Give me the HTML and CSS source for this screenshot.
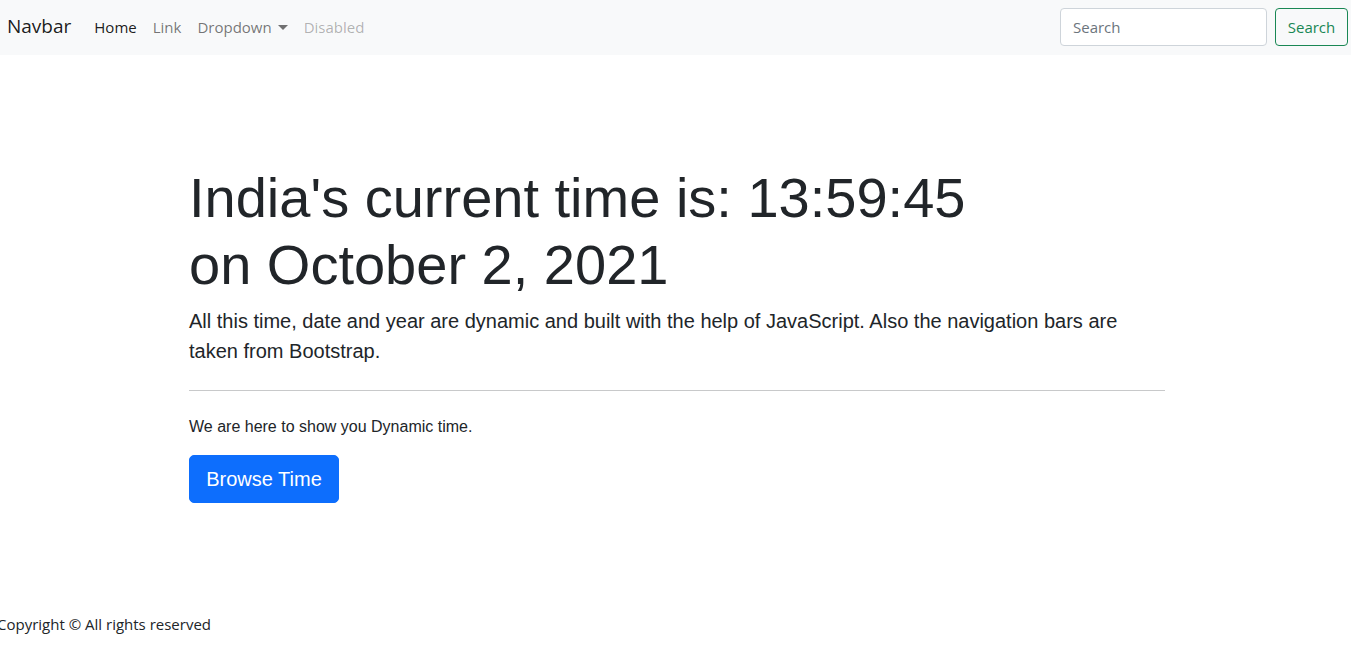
FILE: index.html
```html
<!DOCTYPE html>
<html lang="en">
<head>
<meta charset="utf-8">
<title>Dynamic Time</title>
<link rel="stylesheet" href="styles.css">
</head>
<body>
<nav class="navbar">
  <a class="brand" href="#">Navbar</a>
  <ul class="nav">
    <li><a class="nav-link active" href="#">Home</a></li>
    <li><a class="nav-link" href="#">Link</a></li>
    <li><a class="nav-link dropdown" href="#">Dropdown<span class="caret"></span></a></li>
    <li><a class="nav-link disabled" href="#">Disabled</a></li>
  </ul>
  <form class="search">
    <input class="search-input" type="search" placeholder="Search">
    <button class="search-btn" type="button">Search</button>
  </form>
</nav>
<main class="hero">
  <h1 class="display">India's current time is: 13:59:45<br>on October 2, 2021</h1>
  <p class="lead">All this time, date and year are dynamic and built with the help of JavaScript. Also the navigation bars are taken from Bootstrap.</p>
  <hr class="rule">
  <p class="note">We are here to show you Dynamic time.</p>
  <a class="btn-primary" href="#">Browse Time</a>
</main>
<footer class="footer">Copyright © All rights reserved</footer>
</body>
</html>
```
FILE: styles.css
```css
* { box-sizing: border-box; }
body {
  margin: 0;
  font-family: "Open Sans", "Noto Sans", sans-serif;
  font-size: 15px;
  color: #212529;
  background: #fff;
  overflow: hidden;
}
.navbar {
  display: flex;
  align-items: flex-start;
  height: 55px;
  padding: 8px 3px 0 7px;
  background: #f8f9fa;
}
.brand {
  font-size: 19px;
  line-height: 30px;
  padding: 3px 0 5px;
  color: rgba(0,0,0,.9);
  text-decoration: none;
  margin-right: 16px;
}
.nav {
  display: flex;
  list-style: none;
  margin: 0 0 0 -1px;
  padding: 0;
  flex: 1;
}
.nav-link {
  display: block;
  padding: 7px 8px;
  line-height: 24px;
  color: rgba(0,0,0,.55);
  text-decoration: none;
}
.nav-link.active { color: rgba(0,0,0,.9); }
.nav-link.disabled { color: rgba(0,0,0,.3); }
.caret {
  display: inline-block;
  margin-left: 6px;
  vertical-align: 3px;
  border-top: 5px solid rgba(0,0,0,.55);
  border-left: 5px solid transparent;
  border-right: 5px solid transparent;
}
.search {
  display: flex;
  gap: 8px;
}
.search-input {
  width: 207px;
  height: 38px;
  padding: 6px 12px;
  font: inherit;
  color: #212529;
  background: #fff;
  border: 1px solid #ced4da;
  border-radius: 4px;
}
.search-input::placeholder { color: #6c757d; }
.search-btn {
  width: 73px;
  height: 38px;
  font: inherit;
  color: #198754;
  background: transparent;
  border: 1px solid #198754;
  border-radius: 4px;
  padding: 0;
}
.hero {
  width: 976px;
  margin-left: 189px;
  padding-top: 109px;
  font-family: "Liberation Sans", Arial, sans-serif;
}
.display {
  margin: 0 0 8px;
  font-size: 56px;
  line-height: 67px;
  font-weight: 400;
}
.lead {
  margin: 0;
  font-size: 20px;
  line-height: 30px;
}
.rule {
  margin: 24px 0 24px;
  border: 0;
  border-top: 1px solid #c8c9ca;
}
.note {
  margin: 0 0 16px;
  font-size: 16px;
  line-height: 24px;
}
.btn-primary {
  display: inline-block;
  width: 150px;
  height: 48px;
  line-height: 46px;
  text-align: center;
  font-size: 20px;
  color: #fff;
  background: #0d6efd;
  border: 1px solid #0d6efd;
  border-radius: 5px;
  text-decoration: none;
}
.footer {
  margin-top: 109px;
  margin-left: -3px;
  line-height: 24px;
}
```
